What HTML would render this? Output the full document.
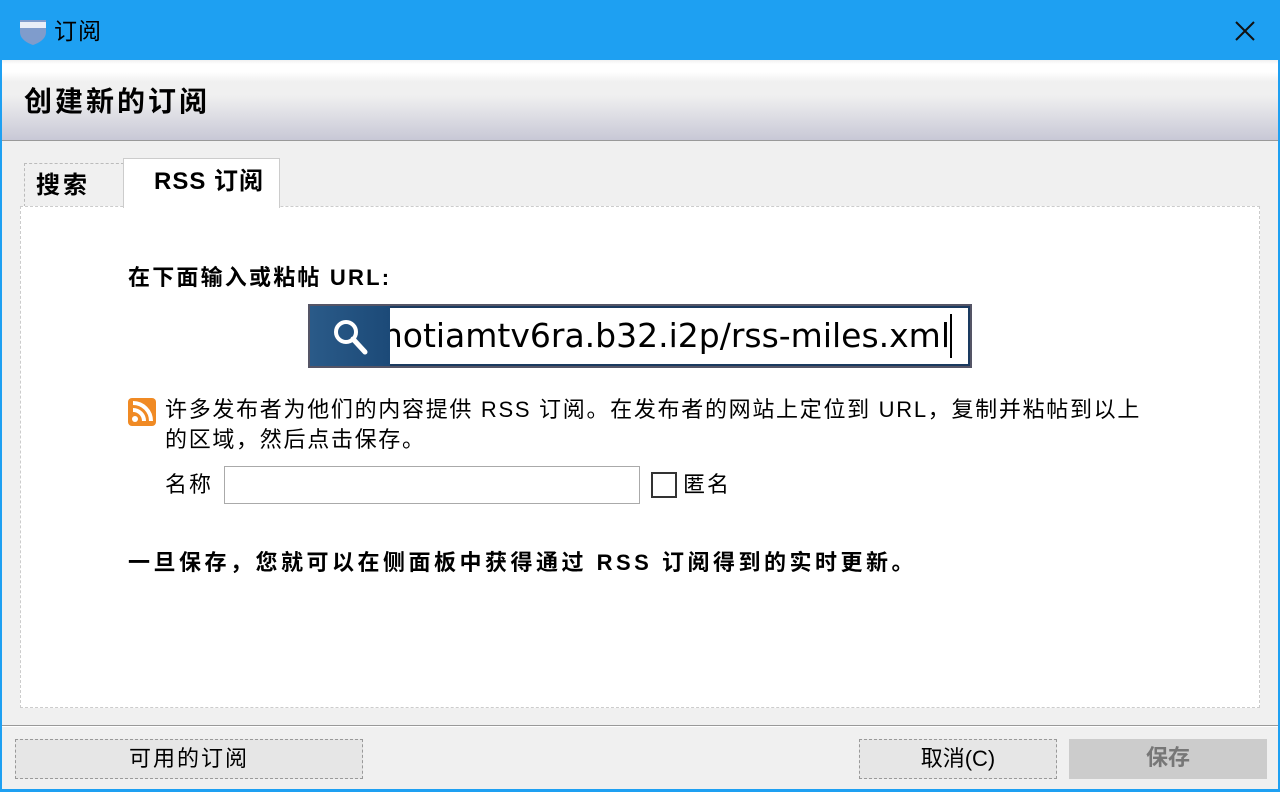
<!DOCTYPE html>
<html><head><meta charset="utf-8"><style>
*{margin:0;padding:0;box-sizing:border-box}
body{width:1280px;height:792px;overflow:hidden;background:#f0f0f0;font-family:"Liberation Sans","Noto Sans CJK SC",sans-serif;position:relative;color:#000}
.abs{position:absolute}
#tb{left:0;top:0;width:1280px;height:60px;background:#1ea0f2}
#bl{left:0;top:60px;width:2px;height:732px;background:#1ea0f2}
#br{left:1278px;top:60px;width:2px;height:732px;background:#1ea0f2}
#bb{left:0;top:789px;width:1280px;height:3px;background:#1ea0f2}
#hd{left:2px;top:60px;width:1276px;height:81px;background:linear-gradient(#f0f0f0 0,#fff 4px,#fff 12px,#f0f0f0 22px,#f0f0f0 35px,#c8c8d6 80px);border-bottom:1px solid #999}
.btn{border:1px dashed #999;background:#e6e6e6;font-size:22px;text-align:center;line-height:38px}
</style></head><body>
<div id="tb" class="abs"></div>
<div id="bl" class="abs"></div><div id="br" class="abs"></div><div id="bb" class="abs"></div>
<svg class="abs" style="left:18px;top:16px" width="30" height="30" viewBox="0 0 30 30"><path d="M2 4h26v12c0 7-7 11-13 13C9 27 2 23 2 16z" fill="#7f9ccc"/><rect x="2" y="6" width="26" height="6" fill="#e8eef8"/></svg>
<div class="abs" style="left:54px;top:16px;font-size:23px;line-height:30px;letter-spacing:1px">订阅</div>
<svg class="abs" style="left:1234px;top:20px" width="22" height="22"><path d="M2 2L20 20M20 2L2 20" stroke="#111" stroke-width="2"/></svg>
<div id="hd" class="abs"></div>
<div class="abs" style="left:24px;top:84px;font-size:28px;font-weight:bold;line-height:36px;letter-spacing:3px">创建新的订阅</div>
<div class="abs" style="left:24px;top:163px;width:100px;height:44px;border:1px dashed #bbb;border-bottom:none;background:#f0f0f0"></div>
<div class="abs" style="left:36px;top:170px;font-size:24px;font-weight:bold;line-height:32px;letter-spacing:3px">搜索</div>
<div class="abs" style="left:20px;top:206px;width:1240px;height:502px;background:#fff;border:1px dashed #ccc"></div>
<div class="abs" style="left:123px;top:158px;width:157px;height:50px;background:#fff;border:1px solid #ccc;border-bottom:none"></div>
<div class="abs" style="left:154px;top:166px;font-size:24px;font-weight:bold;line-height:32px;letter-spacing:1px">RSS 订阅</div>
<div class="abs" style="left:128px;top:263px;font-size:22px;font-weight:bold;line-height:30px;letter-spacing:2.2px">在下面输入或粘帖 URL:</div>
<div class="abs" style="left:308px;top:304px;width:664px;height:64px;background:#1a3a60;border:2px solid #556"></div>
<div class="abs" style="left:310px;top:306px;width:80px;height:60px;background:linear-gradient(90deg,#2a5a88,#1c4a78)"></div>
<svg class="abs" style="left:328px;top:316px" width="44" height="44"><circle cx="18" cy="16" r="10" stroke="#fff" stroke-width="4" fill="none"/><path d="M25 23L37 36" stroke="#fff" stroke-width="5" stroke-linecap="round"/></svg>
<div class="abs" style="left:390px;top:308px;width:578px;height:56px;background:#fff;overflow:hidden"><div style="position:absolute;right:18px;top:6px;font-family:'DejaVu Sans',sans-serif;font-size:33px;line-height:44px;white-space:nowrap">notiamtv6ra.b32.i2p/rss-miles.xml</div><div style="position:absolute;left:560px;top:6px;width:2px;height:44px;background:#000"></div></div>
<svg class="abs" style="left:128px;top:398px" width="28" height="28"><rect width="28" height="28" rx="4" fill="#f08a24"/><circle cx="7" cy="21" r="3" fill="#fff"/><path d="M5 12a11 11 0 0 1 11 11M5 5a18 18 0 0 1 18 18" stroke="#fff" stroke-width="4" fill="none"/></svg>
<div class="abs" style="left:165px;top:395px;font-size:22px;line-height:30px;width:1060px;letter-spacing:1.7px">许多发布者为他们的内容提供 RSS 订阅。在发布者的网站上定位到 URL，复制并粘帖到以上<br>的区域，然后点击保存。</div>
<div class="abs" style="left:165px;top:470px;font-size:22px;line-height:30px;letter-spacing:2px">名称</div>
<div class="abs" style="left:224px;top:466px;width:416px;height:38px;border:1px solid #aaa;background:#fff"></div>
<div class="abs" style="left:651px;top:472px;width:26px;height:26px;border:2px solid #333;background:#fff"></div>
<div class="abs" style="left:683px;top:470px;font-size:22px;line-height:30px;letter-spacing:2px">匿名</div>
<div class="abs" style="left:128px;top:548px;font-size:22px;font-weight:bold;line-height:30px;letter-spacing:3.5px">一旦保存，您就可以在侧面板中获得通过 RSS 订阅得到的实时更新。</div>
<div class="abs" style="left:2px;top:725px;width:1276px;height:2px;background:#999;border-bottom:1px solid #fff"></div>
<div class="abs btn" style="left:15px;top:739px;width:348px;height:40px;letter-spacing:2px">可用的订阅</div>
<div class="abs btn" style="left:859px;top:739px;width:198px;height:40px">取消(C)</div>
<div class="abs btn" style="left:1069px;top:739px;width:198px;height:40px;border:none;background:#ccc;color:#777;font-weight:bold">保存</div>
</body></html>
